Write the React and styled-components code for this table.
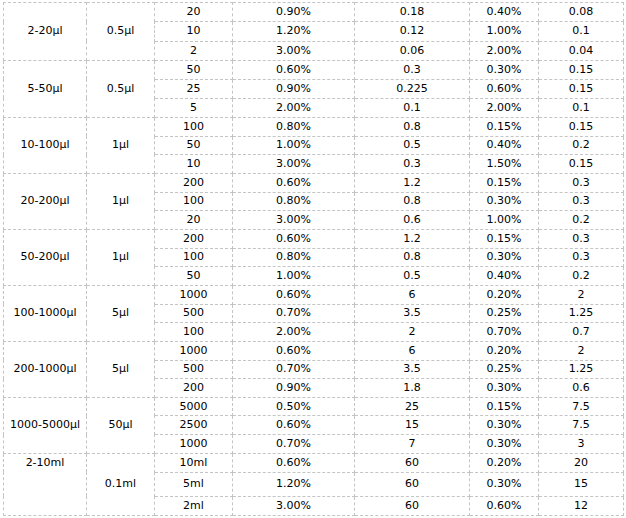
import React from 'react';
import styled, { createGlobalStyle } from 'styled-components';

const GlobalStyle = createGlobalStyle`
  html, body {
    margin: 0;
    padding: 0;
    background: #fff;
  }
`;

const Page = styled.div`
  padding: 2px 0 0 3px;
  font-family: "DejaVu Sans", Verdana, sans-serif;
  font-size: 11px;
  color: #000;
`;

const Table = styled.table`
  width: 621px;
  table-layout: fixed;
  border-collapse: collapse;
`;

const Row = styled.tr`
  height: ${(p) => p.$h}px;
`;

const Cell = styled.td`
  border: 1px dashed #c4c4c4;
  padding: 0;
  text-align: center;
  vertical-align: ${(p) => (p.$top ? 'top' : 'middle')};
  padding-top: ${(p) => (p.$top ? '2px' : '0')};
  line-height: 14px;
  white-space: nowrap;
`;

const widths = [83, 68, 78, 122, 115, 69, 85];

// group heights: first a touch taller, second one px taller, rest 56
const groupHeights = [58, 57, 56, 56, 56, 56, 56, 56];

const groups = [
  ['2-20µl', '0.5µl', [
    ['20', '0.90%', '0.18', '0.40%', '0.08'],
    ['10', '1.20%', '0.12', '1.00%', '0.1'],
    ['2', '3.00%', '0.06', '2.00%', '0.04'],
  ]],
  ['5-50µl', '0.5µl', [
    ['50', '0.60%', '0.3', '0.30%', '0.15'],
    ['25', '0.90%', '0.225', '0.60%', '0.15'],
    ['5', '2.00%', '0.1', '2.00%', '0.1'],
  ]],
  ['10-100µl', '1µl', [
    ['100', '0.80%', '0.8', '0.15%', '0.15'],
    ['50', '1.00%', '0.5', '0.40%', '0.2'],
    ['10', '3.00%', '0.3', '1.50%', '0.15'],
  ]],
  ['20-200µl', '1µl', [
    ['200', '0.60%', '1.2', '0.15%', '0.3'],
    ['100', '0.80%', '0.8', '0.30%', '0.3'],
    ['20', '3.00%', '0.6', '1.00%', '0.2'],
  ]],
  ['50-200µl', '1µl', [
    ['200', '0.60%', '1.2', '0.15%', '0.3'],
    ['100', '0.80%', '0.8', '0.30%', '0.3'],
    ['50', '1.00%', '0.5', '0.40%', '0.2'],
  ]],
  ['100-1000µl', '5µl', [
    ['1000', '0.60%', '6', '0.20%', '2'],
    ['500', '0.70%', '3.5', '0.25%', '1.25'],
    ['100', '2.00%', '2', '0.70%', '0.7'],
  ]],
  ['200-1000µl', '5µl', [
    ['1000', '0.60%', '6', '0.20%', '2'],
    ['500', '0.70%', '3.5', '0.25%', '1.25'],
    ['200', '0.90%', '1.8', '0.30%', '0.6'],
  ]],
  ['1000-5000µl', '50µl', [
    ['5000', '0.50%', '25', '0.15%', '7.5'],
    ['2500', '0.60%', '15', '0.30%', '7.5'],
    ['1000', '0.70%', '7', '0.30%', '3'],
  ]],
];

const lastGroup = ['2-10ml', '0.1ml', [
  ['10ml', '0.60%', '60', '0.20%', '20'],
  ['5ml', '1.20%', '60', '0.30%', '15'],
  ['2ml', '3.00%', '60', '0.60%', '12'],
]];
const lastHeights = [19, 24, 19];

const App = () => {
  return (
    <>
      <GlobalStyle />
      <Page>
        <Table>
          <colgroup>
            {widths.map((w, i) => <col key={i} style={{ width: w }} />)}
          </colgroup>
          <tbody>
            {groups.map(([range, step, rows], gi) =>
              rows.map((r, ri) => (
                <Row key={`${gi}-${ri}`} $h={groupHeights[gi] / 3}>
                  {ri === 0 && <Cell rowSpan={3}>{range}</Cell>}
                  {ri === 0 && <Cell rowSpan={3}>{step}</Cell>}
                  {r.map((v, ci) => <Cell key={ci}>{v}</Cell>)}
                </Row>
              ))
            )}
            {lastGroup[2].map((r, ri) => (
              <Row key={`last-${ri}`} $h={lastHeights[ri]}>
                {ri === 0 && <Cell rowSpan={3} $top>{lastGroup[0]}</Cell>}
                {ri === 0 && <Cell rowSpan={3}>{lastGroup[1]}</Cell>}
                {r.map((v, ci) => <Cell key={ci}>{v}</Cell>)}
              </Row>
            ))}
          </tbody>
        </Table>
      </Page>
    </>
  );
};

export default App;
